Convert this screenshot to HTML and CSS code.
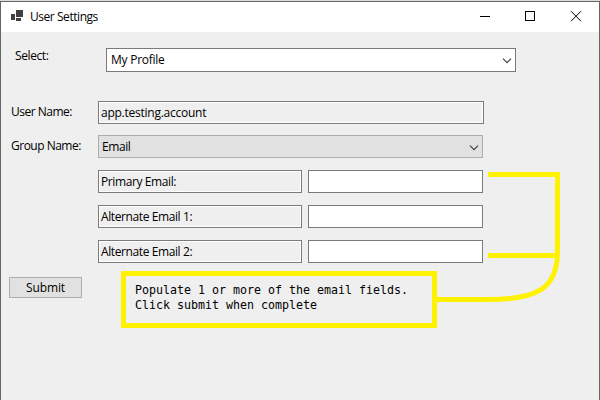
FILE: index.html
```html
<!DOCTYPE html>
<html lang="en">
<head>
<meta charset="utf-8">
<title>User Settings</title>
<link rel="stylesheet" href="styles.css">
</head>
<body>
<div class="window">
  <header class="titlebar">
    <svg class="app-icon" width="13" height="12" viewBox="0 0 13 12" fill="#404040"><path d="M5 0h7v7H5zM0 4h4v6H0zM5 8h5v3H5z"/></svg>
    <h1 class="title">User Settings</h1>
    <svg class="controls" width="102" height="12" viewBox="0 0 102 12" fill="none" stroke="#000"><path d="M0 5.5h10M45.500 .5h9v9h-9z" shape-rendering="crispEdges"/><path d="M91 .2l10 10M101 .2l-10 10"/></svg>
  </header>
  <main class="form">
    <div class="row row-select">
      <label class="label label-select">Select:</label>
      <div class="combo combo-profile"><span class="wide">My Profile</span><svg class="chevron" width="10" height="6" viewBox="0 0 10 6"><path d="M1 .7l4 4 4-4"/></svg></div>
    </div>
    <div class="row row-user">
      <label class="label">User Name:</label>
      <div class="box readonly user-name"><span class="wide">app.testing.account</span></div>
    </div>
    <div class="row">
      <label class="label">Group Name:</label>
      <div class="combo combo-group"><span>Email</span><svg class="chevron" width="10" height="6" viewBox="0 0 10 6"><path d="M1 .7l4 4 4-4"/></svg></div>
    </div>
    <div class="row emails"><div class="box readonly name">Primary Email:</div><div class="box field"></div></div>
    <div class="row emails"><div class="box readonly name">Alternate Email 1:</div><div class="box field"></div></div>
    <div class="row emails"><div class="box readonly name">Alternate Email 2:</div><div class="box field"></div></div>
    <div class="footer">
      <button class="submit">Submit</button>
      <p class="note">Populate 1 or more of the email fields.<br>Click submit when complete</p>
    </div>
  </main>
  <svg class="connector" width="130" height="135" viewBox="0 0 130 135"><path d="M52 4.500H121.500V85C120 118 102 129.500 52 129.500H0M52 85.500H121"/></svg>
</div>
</body>
</html>
```
FILE: styles.css
```css
* { box-sizing: border-box; }
body { margin: 0; background: #dcdcdc; color: #000; font: 12px/16px "Open Sans", "Noto Sans", sans-serif; letter-spacing: -0.4px; }
.window { position: relative; height: 399px; margin-top: 1px; border: 1px solid #666; border-bottom: 0; background: #efefef; overflow: hidden; }
.titlebar { height: 30px; background: #fff; display: flex; align-items: flex-start; padding: 8px 17px 0 10px; }
.title { margin: -1px 0 0 6px; font-size: 12px; font-weight: 400; line-height: 16px; letter-spacing: -0.45px; }
.controls { margin: 1px 0 0 auto; }
.form { padding: 16px 0 0 10px; }
.row { display: flex; height: 23px; margin-bottom: 12px; white-space: nowrap; }
.row-select { height: 24px; margin-bottom: 29px; }
.row-user { margin-bottom: 11px; }
.label { width: 87px; padding-top: 3px; letter-spacing: -0.5px; }
.label-select { width: 95px; padding: 0 0 0 4px; letter-spacing: -0.4px; }
.wide { letter-spacing: -0.25px; }
.combo { display: flex; align-items: center; justify-content: space-between; border: 1px solid #7a7a7a; background: #fff; padding: 0 3px 0 4px; }
.combo-profile { width: 410px; }
.combo-group { width: 385px; background: #e1e1e1; border-color: #adadad; padding-left: 3px; }
.chevron { margin-top: 2px; fill: none; stroke: #444; stroke-width: 1.2; }
.box { border: 1px solid #7a7a7a; padding: 3px 2px 2px; line-height: 16px; }
.readonly { box-shadow: inset 0 0 0 1px #fff; }
.user-name { width: 386px; }
.emails { padding-left: 87px; gap: 6px; }
.name { width: 204px; }
.field { width: 175px; background: #fff; }
.footer { display: flex; align-items: flex-start; margin: -4px 0 0 -2px; }
.submit { width: 73px; height: 21px; margin-top: 6px; padding: 0; border: 1px solid #adadad; background: #e1e1e1; color: #000; font: inherit; line-height: 19px; letter-spacing: -0.15px; }
.note { width: 316px; height: 57px; margin: 0 0 0 39px; padding: 7px 0 0 9px; border: 5px solid #fff200; font: 11.63px/15px "DejaVu Sans Mono", monospace; letter-spacing: 0; white-space: nowrap; }
.connector { position: absolute; left: 435px; top: 168px; fill: none; stroke: #fff200; stroke-width: 5; }
```
